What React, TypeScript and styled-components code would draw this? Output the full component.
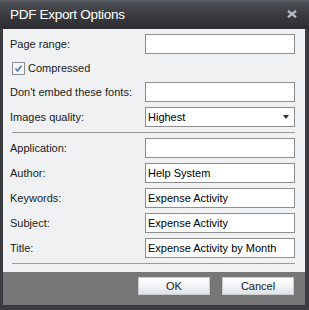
import React from 'react';
import styled, { createGlobalStyle } from 'styled-components';

const GlobalStyle = createGlobalStyle`
  html, body {
    margin: 0;
    padding: 0;
    background: #ffffff;
  }
  * {
    box-sizing: border-box;
  }
`;

const Window = styled.div`
  width: 309px;
  height: 310px;
  display: flex;
  flex-direction: column;
  background-color: #3a3c40;
  padding: 0 4px 5px 3px;
  font-family: 'Liberation Sans', Arial, sans-serif;
`;

const TitleBar = styled.div`
  height: 29px;
  margin: 0 -4px 0 -3px;
  padding: 0 12px 1px 10px;
  display: flex;
  align-items: center;
  justify-content: space-between;
  background: linear-gradient(#5b5f66 0px, #4a4d52 3px, #3a3c40 14px, #2c2d30 29px);
  color: #ffffff;
  font-size: 13.5px;
  letter-spacing: -0.3px;
`;

const Body = styled.div`
  flex: 1;
  background-color: #f0f1f3;
  padding: 5px 10px 0 7px;
  display: flex;
  flex-direction: column;
  gap: 5px;
`;

const Row = styled.div<{ $h?: number }>`
  height: ${(p) => p.$h ?? 20}px;
  display: flex;
  align-items: center;
  justify-content: space-between;
  font-size: 11px;
  color: #1a1a1a;
`;

const Label = styled.span`
  white-space: nowrap;
`;

const Field = styled.div`
  width: 150px;
  height: 20px;
  border: 1px solid #8e8e8e;
  background: #ffffff;
  padding: 0 2px;
  display: flex;
  align-items: center;
  justify-content: space-between;
  font-size: 11px;
  color: #000;
`;

const Arrow = styled.span`
  width: 0;
  height: 0;
  border-left: 3.5px solid transparent;
  border-right: 3.5px solid transparent;
  border-top: 4px solid #333;
  margin-right: 3px;
`;

const CheckLabel = styled.label`
  display: flex;
  align-items: center;
  gap: 3px;
  margin-left: 2px;
`;

const Separator = styled.div`
  height: 1px;
  background-color: #9c9c9c;
  margin: 0 0 0 2px;
  flex-shrink: 0;
`;

const Footer = styled.div`
  height: 33px;
  background-color: #777777;
  padding: 5px 11px 0 0;
  display: flex;
  justify-content: flex-end;
  gap: 12px;
`;

const Button = styled.div`
  width: 72px;
  height: 18px;
  border: 1px solid #c9ccd0;
  background: linear-gradient(#ffffff 0%, #f4f5f7 45%, #dfe3e8 100%);
  display: flex;
  align-items: center;
  justify-content: center;
  font-size: 11px;
  color: #1a1a1a;
`;

const CheckIcon = () => (
  <svg width="13" height="13" viewBox="0 0 13 13">
    <rect x="0.5" y="0.5" width="12" height="12" fill="#f4f6f8" stroke="#8c8f94" />
    <path d="M3.5 6.5 L5.5 8.8 L9.5 3.8" fill="none" stroke="#5a7db3" strokeWidth="1.8" />
  </svg>
);

const CloseIcon = () => (
  <svg width="10" height="8" viewBox="0 0 10 8">
    <path d="M1 0.8 L9 7.2 M9 0.8 L1 7.2" stroke="#b7c0c8" strokeWidth="2.2" />
  </svg>
);

const fields: [string, string][] = [
  ['Application:', ''],
  ['Author:', 'Help System'],
  ['Keywords:', 'Expense Activity'],
  ['Subject:', 'Expense Activity'],
  ['Title:', 'Expense Activity by Month'],
];

export default function App() {
  return (
    <>
      <GlobalStyle />
      <Window>
        <TitleBar>
          <span>PDF Export Options</span>
          <CloseIcon />
        </TitleBar>
        <Body>
          <Row>
            <Label>Page range:</Label>
            <Field />
          </Row>
          <Row $h={18}>
            <CheckLabel>
              <CheckIcon />
              Compressed
            </CheckLabel>
          </Row>
          <Row>
            <Label>Don't embed these fonts:</Label>
            <Field />
          </Row>
          <Row>
            <Label>Images quality:</Label>
            <Field>
              Highest
              <Arrow />
            </Field>
          </Row>
          <Separator />
          {fields.map(([label, value]) => (
            <Row key={label}>
              <Label>{label}</Label>
              <Field>{value}</Field>
            </Row>
          ))}
          <Separator />
        </Body>
        <Footer>
          <Button>OK</Button>
          <Button>Cancel</Button>
        </Footer>
      </Window>
    </>
  );
}
